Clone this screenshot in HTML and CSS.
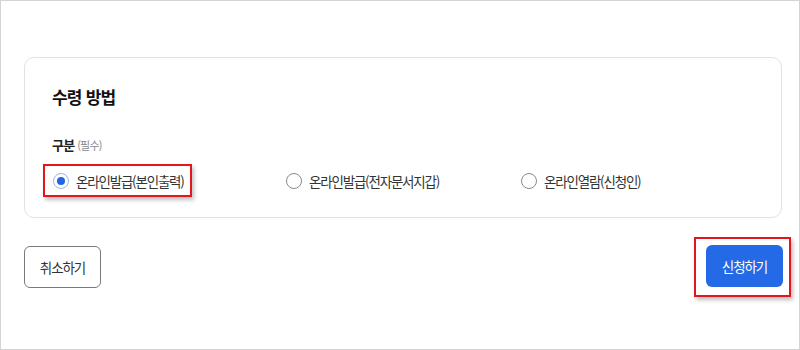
FILE: index.html
```html
<!DOCTYPE html>
<html lang="ko">
<head>
<meta charset="utf-8">
<title>수령 방법</title>
<link rel="stylesheet" href="styles.css">
</head>
<body>
<div class="frame">
  <section class="card">
    <h2 class="title">수령 방법</h2>
    <div class="field-label">구분 <span class="req">(필수)</span></div>
    <div class="options">
      <label class="option highlight">
        <span class="radio checked"></span>
        <span class="opt-text">온라인발급(본인출력)</span>
      </label>
      <label class="option">
        <span class="radio"></span>
        <span class="opt-text">온라인발급(전자문서지갑)</span>
      </label>
      <label class="option">
        <span class="radio"></span>
        <span class="opt-text">온라인열람(신청인)</span>
      </label>
    </div>
  </section>
  <div class="actions">
    <button class="btn btn-cancel">취소하기</button>
    <div class="submit-wrap">
      <button class="btn btn-submit">신청하기</button>
    </div>
  </div>
</div>
</body>
</html>
```
FILE: styles.css
```css
* { box-sizing: border-box; }
html, body { margin: 0; padding: 0; }
body {
  font-family: "Noto Sans CJK KR", "Noto Sans", sans-serif;
  color: #222;
  background: #fff;
}
.frame {
  width: 800px;
  height: 350px;
  border: 1px solid #d4d4d4;
  padding: 56px 17px 0 23px;
}
.card {
  border: 1px solid #e2e2e2;
  border-radius: 10px;
  padding: 26px 27px 0 27px;
  height: 161px;
}
.title {
  margin: 0;
  font-size: 17px;
  font-weight: 700;
  line-height: 26px;
  color: #111;
  letter-spacing: -0.8px;
}
.field-label {
  margin-top: 26px;
  font-size: 13px;
  font-weight: 700;
  line-height: 18px;
  color: #222;
  letter-spacing: -0.8px;
}
.req {
  font-size: 11px;
  font-weight: 400;
  color: #888;
}
.options {
  margin-top: 10px;
  display: grid;
  grid-template-columns: 234px 235px 1fr;
}
.option {
  display: flex;
  align-items: center;
  gap: 7px;
  height: 33px;
  font-size: 13.5px;
  color: #333;
  letter-spacing: -1.2px;
}
.option.highlight {
  justify-self: start;
  margin-left: -9px;
  padding: 0 6px 0 8px;
  border: 2px solid #e3161c;
  box-shadow: 2px 3px 4px rgba(0,0,0,0.25);
}
.radio {
  width: 16px;
  height: 16px;
  border: 1px solid #8a8a8a;
  border-radius: 50%;
  background: #fff;
  flex: none;
  display: flex;
  align-items: center;
  justify-content: center;
}
.radio.checked {
  border-color: #9bb5e6;
}
.radio.checked::after {
  content: "";
  width: 8px;
  height: 8px;
  border-radius: 50%;
  background: #1f66e5;
}
.actions {
  margin-top: 27px;
  display: flex;
  justify-content: space-between;
  align-items: flex-start;
}
.btn {
  font-family: inherit;
  font-size: 13.5px;
  height: 42px;
  width: 77px;
  border-radius: 6px;
  cursor: pointer;
  letter-spacing: -1.1px;
}
.btn-cancel {
  background: #fff;
  border: 1px solid #7a7a7a;
  color: #333;
  margin-top: 1px;
}
.submit-wrap {
  margin-top: -8px;
  margin-right: -9px;
  padding: 6px 6px 8px 10px;
  border: 2px solid #e3161c;
  box-shadow: 2px 3px 4px rgba(0,0,0,0.25);
}
.btn-submit {
  display: block;
  background: #2469e6;
  border: none;
  color: #fff;
}
```
